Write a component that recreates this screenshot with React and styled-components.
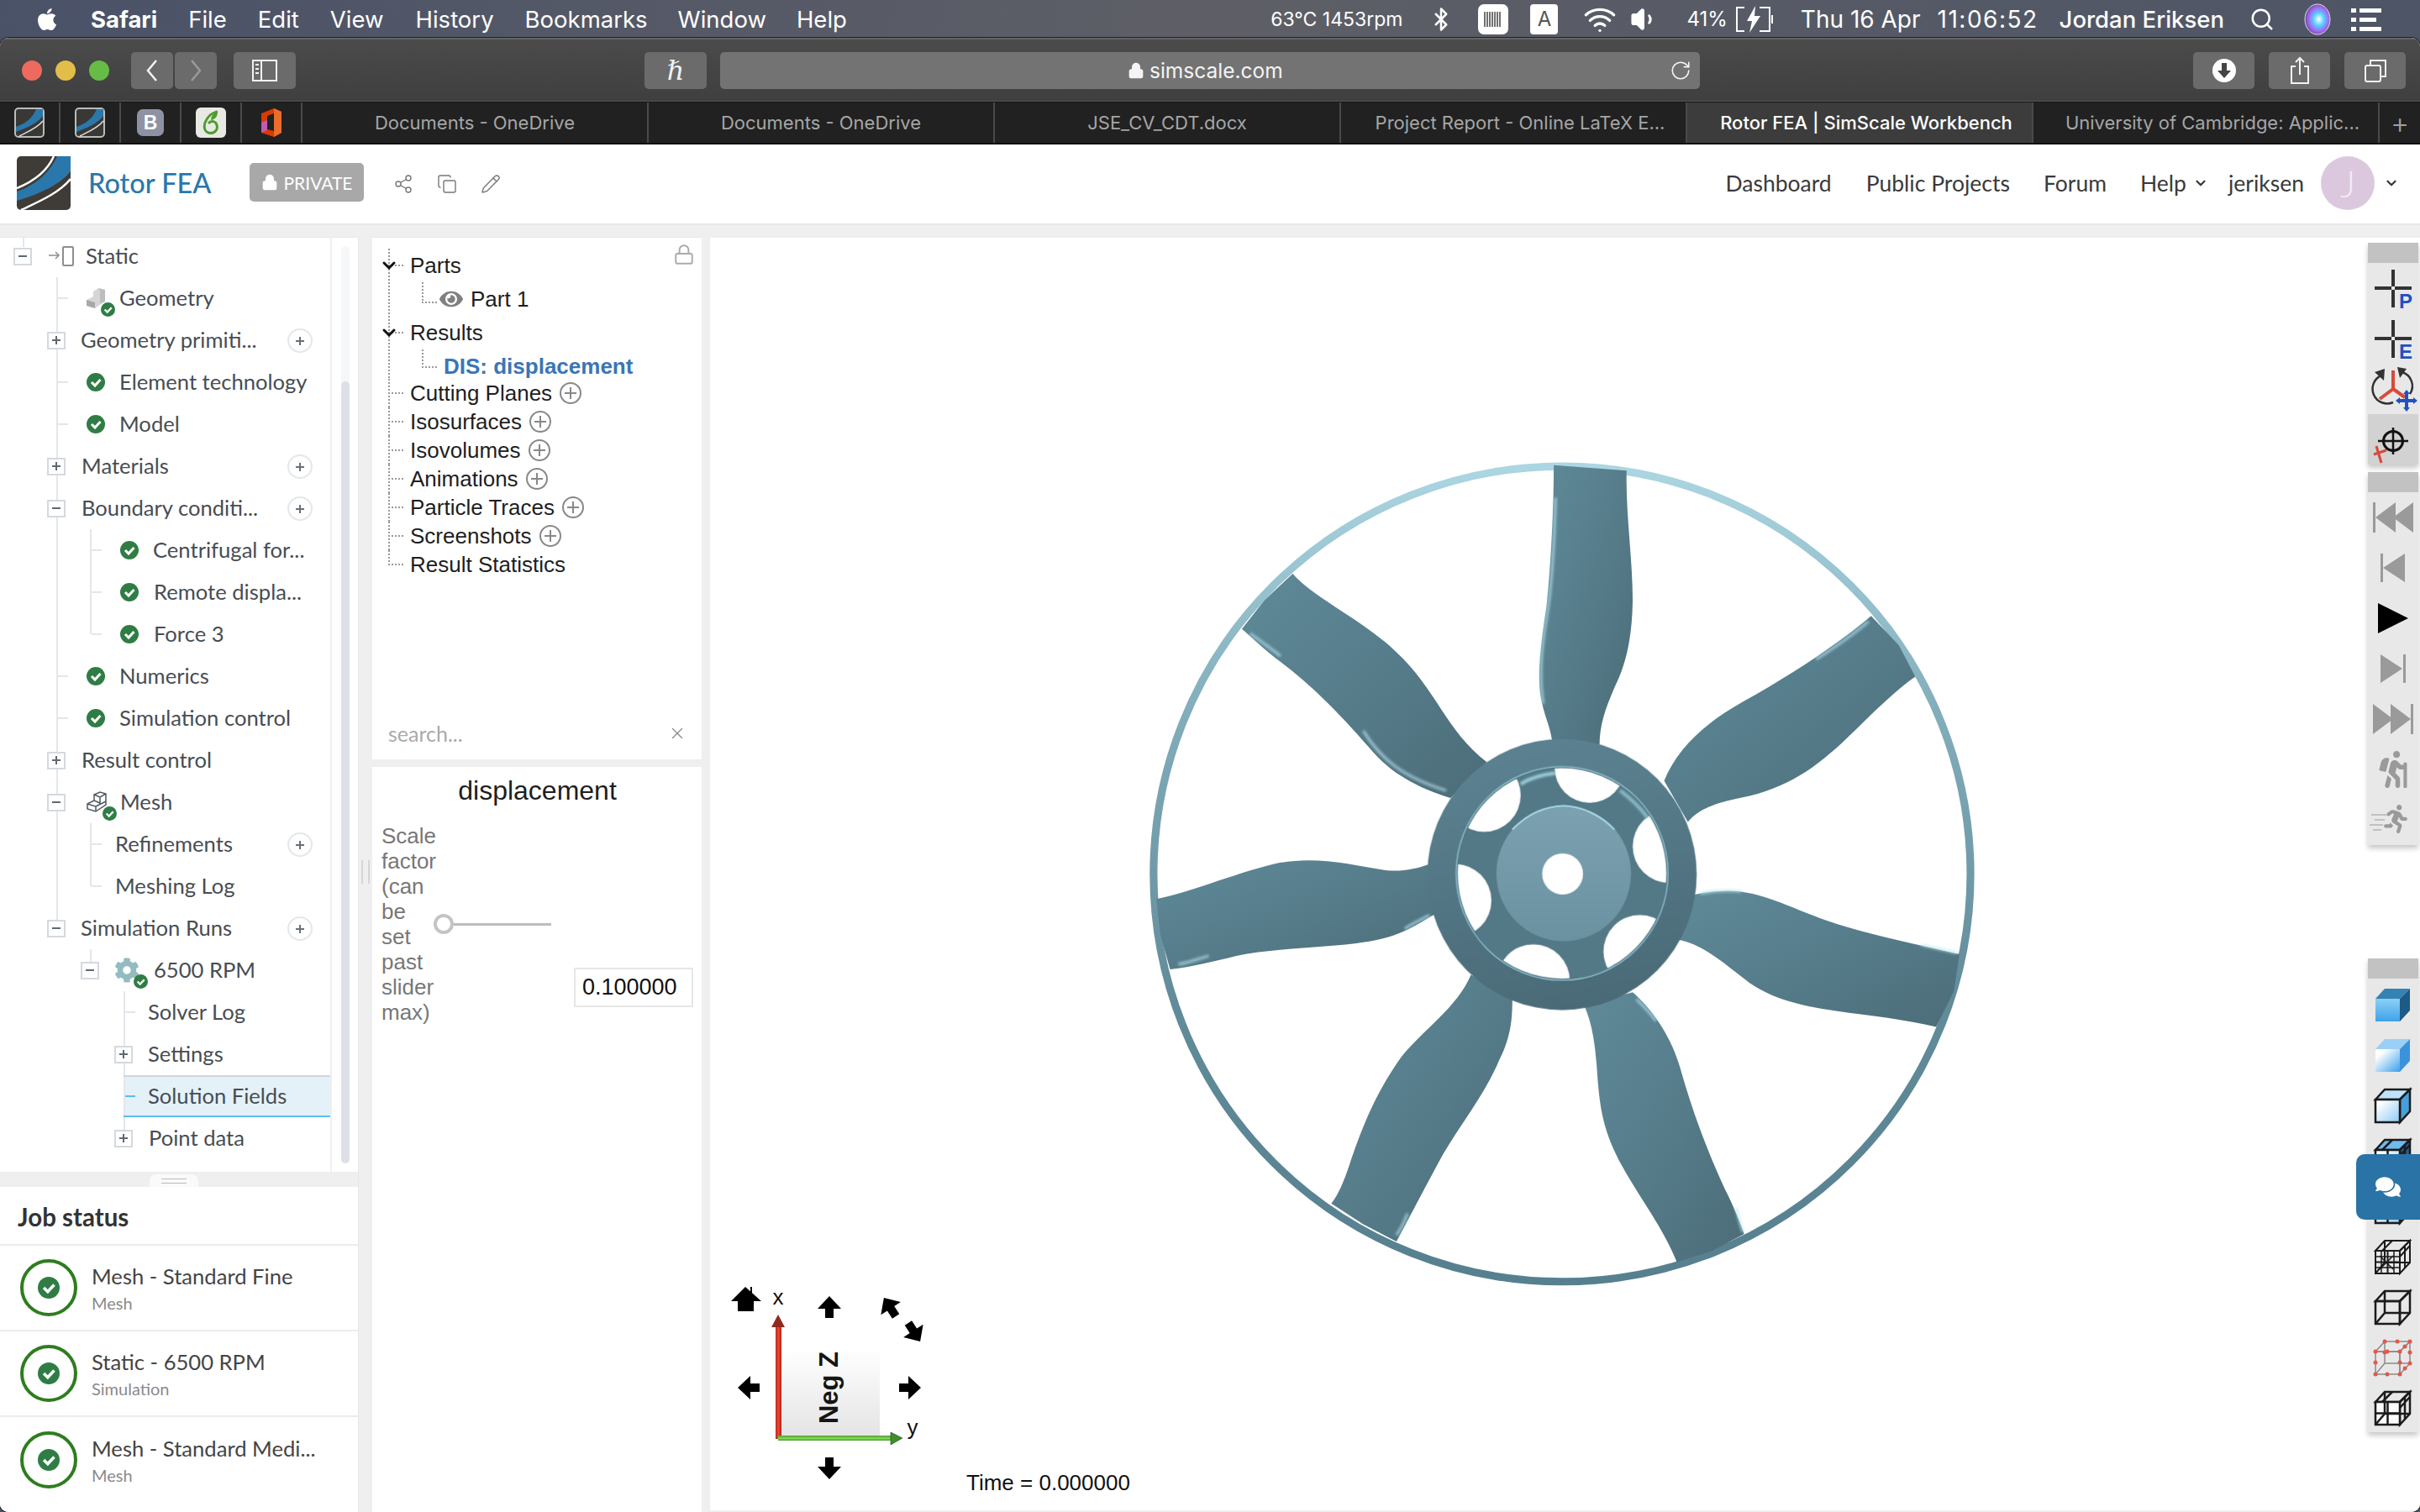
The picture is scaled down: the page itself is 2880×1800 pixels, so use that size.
import styled, { createGlobalStyle } from "styled-components";
import { Bluetooth, ChevronDown, Copy, Lock, Pencil, RotateCw, Search, Share2, Volume1, Wifi, X } from "lucide-react";
import { FaApple, FaCog, FaComments, FaHiking, FaRunning, FaEye } from "react-icons/fa";

const GlobalStyle = createGlobalStyle`
    html, body {
        margin: 0;
        width: 2880px;
        height: 1800px;
        overflow: hidden;
        background: #000;
    }
    * { box-sizing: border-box; }
`;

const Page = styled.div`
    width: 2880px;
    height: 1800px;
    display: flex;
    flex-direction: column;
    background: linear-gradient(90deg, #4a5268, #5e5f66 50%, #4e5566);
    font-family: "Lato", sans-serif;
`;

const MenuBar = styled.div`
    height: 45px;
    flex: none;
    display: flex;
    align-items: center;
    padding-left: 41px;
    color: #fff;
    font-family: "Inter", sans-serif;
    font-size: 27.5px;
`;

const MenuItem = styled.span`
    margin-left: ${props => props.$ml}px;
    font-weight: ${props => props.$bold ? 700 : 400};
    white-space: nowrap;
`;

const StatusArea = styled.div`
    margin-left: auto;
    display: flex;
    align-items: center;
    height: 100%;
`;

const StatusText = styled.span`
    margin-left: ${props => props.$ml || 0}px;
    font-size: ${props => props.$size || 28}px;
    font-weight: ${props => props.$weight || 400};
    letter-spacing: ${props => props.$track || 0}px;
    white-space: nowrap;
`;

const StatusIcon = styled.span`
    margin-left: ${props => props.$ml}px;
    display: flex;
    align-items: center;
`;

const InputBadge = styled.span`
    margin-left: ${props => props.$ml}px;
    width: 33px;
    height: 36px;
    background: #fff;
    border-radius: 4px;
    color: #555;
    font-size: 24px;
    display: flex;
    align-items: center;
    justify-content: center;
`;

const Window = styled.div`
    flex: 1;
    display: flex;
    flex-direction: column;
    min-height: 0;
    border-radius: 10px;
    overflow: hidden;
    background: #fff;
    box-shadow: 0 0 0 1px #222;
`;

const Toolbar = styled.div`
    height: 76px;
    flex: none;
    display: flex;
    align-items: center;
    padding-left: 26px;
    background: linear-gradient(#4b4b4b, #3f3f3f);
    border-top: 2px solid #646464;
    border-bottom: 1px solid #555;
`;

const Light = styled.span`
    width: 24px;
    height: 24px;
    border-radius: 50%;
    margin-right: 16px;
    background: ${props => props.$color};
`;

const ToolButton = styled.button`
    width: ${props => props.$w || 50}px;
    height: 44px;
    margin-left: ${props => props.$ml || 0}px;
    border: none;
    border-radius: 5px;
    background: #6b6b6b;
    color: ${props => props.$dim ? "#9a9a9a" : "#f2f2f2"};
    padding: 0;
    display: flex;
    align-items: center;
    justify-content: center;
    flex: none;
`;

const HistoryGlyph = styled.span`
    font-family: "DejaVu Serif", serif;
    font-style: italic;
    font-size: 32px;
    line-height: 1;
`;

const UrlBar = styled.div`
    width: 1166px;
    height: 44px;
    margin-left: 16px;
    padding: 0 10px 0 485px;
    border-radius: 5px;
    background: #737373;
    color: #f4f4f4;
    font-family: "Inter", sans-serif;
    font-size: 24.5px;
    display: flex;
    align-items: center;
    gap: 6px;
    flex: none;
`;

const Reload = styled.span`
    margin-left: auto;
    display: flex;
`;

const TabBar = styled.div`
    height: 51px;
    flex: none;
    display: flex;
    background: #212121;
    border-bottom: 2px solid #0e0e0e;
    border-top: 1px solid #141414;
    font-family: "Inter", sans-serif;
    font-size: 22px;
`;

const PinnedTab = styled.div`
    width: 72px;
    flex: none;
    display: flex;
    align-items: center;
    justify-content: center;
    border-right: 2px solid #4a4a4a;
`;

const Tab = styled.div`
    width: 412px;
    flex: none;
    display: flex;
    align-items: center;
    justify-content: center;
    padding-left: ${props => props.$pl}px;
    white-space: nowrap;
    border-right: 2px solid #4a4a4a;
    background: ${props => props.$active ? "#3c3c3c" : "transparent"};
    color: ${props => props.$active ? "#fff" : "#a6a6a6"};
    font-weight: ${props => props.$active ? 500 : 400};
`;

const NewTab = styled.div`
    flex: 1;
    display: flex;
    align-items: center;
    justify-content: center;
    color: #a0a0a0;
    font-size: 34px;
    font-weight: 300;
`;

const FaviconB = styled.span`
    width: 32px;
    height: 32px;
    border-radius: 7px;
    background: #8e92a4;
    color: #fff;
    font-family: "Liberation Sans", sans-serif;
    font-weight: 700;
    font-size: 23px;
    display: flex;
    align-items: center;
    justify-content: center;
`;

const AppHeader = styled.header`
    height: 96px;
    flex: none;
    display: flex;
    align-items: center;
    padding: 0 25px 2px 20px;
    background: #fff;
    border-bottom: 2px solid #e8e8e8;
`;

const ProjectName = styled.span`
    margin: 0 0 2px 21px;
    color: #2a78ab;
    font-size: 32.5px;
    font-weight: 500;
`;

const PrivateBadge = styled.span`
    margin: 0 0 2px 46px;
    width: 136px;
    height: 46px;
    border-radius: 5px;
    background: #a8a8a8;
    color: #fff;
    font-size: 21px;
    display: flex;
    align-items: center;
    justify-content: center;
    gap: 6px;
`;

const HeaderActions = styled.div`
    margin: 2px 0 0 35px;
    display: flex;
    gap: 28px;
    color: #777;
`;

const Nav = styled.nav`
    margin-left: auto;
    display: flex;
    align-items: center;
    color: #3a3a3a;
    font-size: 26.5px;
`;

const NavLink = styled.span`
    margin-left: ${props => props.$ml || 0}px;
    white-space: nowrap;
    display: flex;
    align-items: center;
    gap: 8px;
`;

const Avatar = styled.span`
    width: 64px;
    height: 64px;
    margin: 0 11px 0 20px;
    border-radius: 50%;
    background: #dcc8de;
    color: #f3ecf4;
    font-size: 44px;
    font-weight: 300;
    display: flex;
    align-items: center;
    justify-content: center;
`;

const Workspace = styled.main`
    flex: 1;
    min-height: 0;
    display: flex;
    padding-top: 14px;
    background: #efefef;
`;

const LeftColumn = styled.div`
    width: 427px;
    flex: none;
    display: flex;
    flex-direction: column;
    border-right: 1px solid #e8e8e8;
`;

const TreePanel = styled.section`
    height: 1113px;
    flex: none;
    display: flex;
    overflow: hidden;
    background: #fff;
    border-top: 1px solid #e8e8e8;
`;

const TreeList = styled.div`
    width: 395px;
    flex: none;
    margin-top: -3px;
    border-right: 2px solid #edf0f2;
    color: #474d53;
    font-size: 25.6px;
`;

const ScrollTrack = styled.div`
    width: 10px;
    margin: 10px 0 10px 11px;
    padding-top: 161px;
    border-radius: 5px;
    background: #f5f7f9;
`;

const ScrollThumb = styled.div`
    height: 100%;
    border-radius: 5px;
    background: #dde1e6;
`;

const treeBackground = ({ $lines = [], $stub, $selected }) => {
    const layers = [];
    $lines.forEach(([x, h]) => {
        layers.push(`linear-gradient(#e3e6ea, #e3e6ea) ${x}px 0 / 2px ${h} no-repeat`);
    });
    if ($stub) {
        const c = $selected ? "#5bbcf0" : "#e3e6ea";
        layers.unshift(`linear-gradient(${c}, ${c}) ${$stub + 2}px 24px / 12px 2px no-repeat`);
    }
    if ($selected) {
        layers.unshift(`linear-gradient(#5bbcf0, #5bbcf0) ${$selected}px 48px / 100% 2px no-repeat`);
        layers.unshift(`linear-gradient(#cfd6dc, #cfd6dc) ${$selected}px 0 / 100% 2px no-repeat`);
        layers.push(`linear-gradient(#e5f1f8, #e5f1f8) ${$selected}px 0 / 100% 100% no-repeat`);
    }
    return layers.length ? layers.join(", ") : "none";
};

const TreeRow = styled.div`
    height: 50px;
    display: flex;
    align-items: center;
    white-space: nowrap;
    background: ${treeBackground};
`;

const Toggle = styled.span`
    position: relative;
    width: 22px;
    height: 21px;
    flex: none;
    margin-left: ${props => props.$ml}px;
    border: 2px solid #d4d9de;
    background: #fff;
    &::before {
        content: "";
        position: absolute;
        left: 4px;
        top: 7px;
        width: 10px;
        height: 2px;
        background: #5d6872;
    }
    &::after {
        content: "";
        position: absolute;
        left: 8px;
        top: 3px;
        width: 2px;
        height: 10px;
        background: #5d6872;
        display: ${props => props.$open ? "none" : "block"};
    }
`;

const IconSlot = styled.span`
    position: relative;
    width: ${props => props.$w}px;
    height: 30px;
    flex: none;
    margin-left: ${props => props.$ml}px;
    display: flex;
    align-items: center;
`;

const BadgeSlot = styled.span`
    position: absolute;
    right: -10px;
    bottom: -7px;
    display: flex;
`;

const TreeLabel = styled.span`
    margin-left: ${props => props.$ml}px;
    margin-bottom: 3px;
`;

const AddButton = styled.span`
    position: relative;
    width: 30px;
    height: 29px;
    flex: none;
    margin: 0 21px 0 auto;
    border: 2px solid #e4e7eb;
    border-radius: 50%;
    &::before {
        content: "";
        position: absolute;
        left: 8px;
        top: 12px;
        width: 10px;
        height: 2px;
        background: #66717b;
    }
    &::after {
        content: "";
        position: absolute;
        left: 12px;
        top: 8px;
        width: 2px;
        height: 10px;
        background: #66717b;
    }
`;

const SplitH = styled.div`
    height: 18px;
    flex: none;
    display: flex;
    justify-content: center;
    background: #efefef;
    padding-right: 12px;
`;

const SplitHandle = styled.div`
    width: 58px;
    height: 15px;
    margin-top: 3px;
    border-radius: 8px 8px 0 0;
    background: #fafafa;
    display: flex;
    align-items: center;
    justify-content: center;
    &::before {
        content: "";
        width: 30px;
        height: 4px;
        border-top: 1px solid #bbb;
        border-bottom: 1px solid #bbb;
    }
`;

const JobPanel = styled.section`
    flex: 1;
    background: #fff;
    display: flex;
    flex-direction: column;
`;

const JobTitle = styled.h3`
    margin: 0;
    height: 70px;
    flex: none;
    padding: 2px 0 0 21px;
    display: flex;
    align-items: center;
    color: #333;
    font-size: 29.5px;
    font-weight: 700;
    border-bottom: 2px solid #ececec;
`;

const JobRow = styled.div`
    height: 102px;
    flex: none;
    display: flex;
    align-items: center;
    border-bottom: ${props => props.$last ? "none" : "2px solid #ececec"};
    padding-left: 24px;
    gap: 17px;
`;

const JobRing = styled.span`
    width: 68px;
    height: 68px;
    flex: none;
    border: 4px solid #2e7d1e;
    border-radius: 50%;
    display: flex;
    align-items: center;
    justify-content: center;
`;

const JobText = styled.div`
    padding-top: 2px;
`;

const JobName = styled.div`
    color: #444;
    font-size: 25.6px;
    line-height: 34px;
    white-space: nowrap;
`;

const JobKind = styled.div`
    color: #8a8a8a;
    font-size: 20px;
    line-height: 30px;
`;

const GutterV = styled.div`
    width: ${props => props.$w}px;
    flex: none;
    display: flex;
    justify-content: center;
    padding-top: ${props => props.$top || 0}px;
    &::before {
        content: "";
        display: ${props => props.$top ? "block" : "none"};
        width: 6px;
        height: 28px;
        border-left: 2px solid #d5d5d5;
        border-right: 2px solid #d5d5d5;
    }
`;

const MiddleColumn = styled.div`
    width: 392px;
    flex: none;
    display: flex;
    flex-direction: column;
    gap: 9px;
`;

const PartsPanel = styled.section`
    position: relative;
    height: 622px;
    flex: none;
    padding-top: 13px;
    display: flex;
    flex-direction: column;
    background: #fff;
    border-top: 1px solid #e8e8e8;
    font-family: "Liberation Sans", sans-serif;
    font-size: 26px;
    color: #1e1e1e;
`;

const LockMark = styled.span`
    position: absolute;
    top: 7px;
    right: 8px;
    color: #aaa;
    display: flex;
`;

const dots = "repeating-linear-gradient";

const PartsRow = styled.div`
    height: ${props => props.$h || 34}px;
    padding-top: ${props => props.$pt || 0}px;
    padding-left: ${props => props.$pl || 45}px;
    display: flex;
    align-items: center;
    gap: 9px;
    white-space: nowrap;
    background:
        ${props => props.$child
            ? `${dots}(to right, #999 0 2px, transparent 2px 4px) 59px 60% / 20px 2px no-repeat,
               ${dots}(to bottom, #999 0 2px, transparent 2px 4px) 59px 0 / 2px 60% no-repeat,`
            : `${dots}(to right, #999 0 2px, transparent 2px 4px) 19px 50% / 20px 2px no-repeat,`}
        ${dots}(to bottom, #999 0 2px, transparent 2px 4px) 19px 0 / 2px ${props => props.$end ? "50%" : "100%"} no-repeat;
`;

const FoldMark = styled.span`
    width: 24px;
    margin-left: -37px;
    margin-right: 4px;
    display: flex;
`;

const ResultLink = styled.span`
    color: #3a76b5;
    font-weight: 700;
`;

const SearchRow = styled.div`
    margin-top: auto;
    height: 62px;
    padding: 0 18px 0 19px;
    display: flex;
    align-items: center;
    justify-content: space-between;
    color: #aaa;
    font-family: "Lato", sans-serif;
    font-size: 25px;
`;

const PropsPanel = styled.section`
    flex: 1;
    padding: 9px 10px 0 11px;
    background: #fff;
    font-family: "Liberation Sans", sans-serif;
`;

const PropsTitle = styled.h4`
    margin: 0 0 20px;
    height: 38px;
    line-height: 38px;
    text-align: center;
    font-size: 32px;
    font-weight: 400;
    color: #1e1e1e;
`;

const FieldRow = styled.div`
    display: grid;
    grid-template-columns: 62px 140px 1fr;
`;

const FieldLabel = styled.div`
    color: #777;
    font-size: 26px;
    line-height: 30px;
`;

const SliderWrap = styled.div`
    display: flex;
    align-items: center;
`;

const SliderThumb = styled.span`
    width: 24px;
    height: 24px;
    flex: none;
    border: 4px solid #c4c4c4;
    border-radius: 50%;
    background: #fff;
`;

const SliderTrack = styled.span`
    width: 116px;
    height: 3px;
    background: #bdbdbd;
`;

const ValueBox = styled.div`
    align-self: end;
    justify-self: end;
    width: 142px;
    height: 47px;
    margin-bottom: 21px;
    padding-left: 8px;
    display: flex;
    align-items: center;
    border: 2px solid #e6e6e6;
    font-size: 27px;
    color: #111;
`;

const Viewer = styled.section`
    position: relative;
    flex: 1;
    margin: 1px 0 2px 0;
    background: #fff;
    overflow: hidden;
`;

const RotorFrame = styled.svg`
    position: absolute;
    left: 495px;
    top: 245px;
`;

const TriadFrame = styled.div`
    position: absolute;
    left: 16px;
    top: 1242px;
`;

const TimeLabel = styled.span`
    position: absolute;
    left: 305px;
    top: 1467px;
    font-family: "Liberation Sans", sans-serif;
    font-size: 26px;
    color: #111;
`;

const ToolColumn = styled.div`
    position: absolute;
    top: 6px;
    right: 2px;
    width: 60px;
    display: flex;
    flex-direction: column;
`;

const ToolGroup = styled.div`
    margin-top: ${props => props.$mt || 0}px;
    background: #e8e8e8;
    box-shadow: 0 4px 6px rgba(0, 0, 0, 0.22);
    &::before {
        content: "";
        display: block;
        height: 24px;
        background: #c2c2c2;
    }
`;

const ToolCell = styled.div`
    height: 60px;
    display: flex;
    align-items: center;
    justify-content: center;
    color: #9a9a9a;
    background: ${props => props.$active ? "#d2d2d2" : "transparent"};
`;

const ChatTab = styled.div`
    position: absolute;
    top: 1091px;
    right: 0;
    width: 76px;
    height: 78px;
    border-radius: 10px 0 0 10px;
    background: #2a73a6;
    color: #fff;
    display: flex;
    align-items: center;
    justify-content: center;
`;

const BlueLetter = styled.text`
    font-family: "Liberation Sans", sans-serif;
    font-weight: 700;
    font-size: 24px;
    fill: #2150c0;
`;

const LogoMark = ({ size = 64 }) => (
    <svg width={size} height={size} viewBox="0 0 64 64">
        <rect width="64" height="64" rx="5" fill="#3f3b36" />
        <path d="M48 0H64V18C52 33 28 45 0 53V42C24 34 40 18 48 0Z" fill="#2a78ab" />
        <path d="M44 0C36 18 20 30 0 38" stroke="#fff" strokeWidth="2.5" fill="none" />
        <path d="M64 27C50 44 26 54 5 64" stroke="#fff" strokeWidth="2.5" fill="none" />
    </svg>
);

const PinnedLogo = () => (
    <svg width="36" height="36" viewBox="0 0 36 36">
        <rect x="1" y="1" width="34" height="34" rx="4" fill="#3a3835" stroke="#bbb" strokeWidth="2" />
        <path d="M26 2H34V10C28 18 16 24 2 29V23C14 19 22 12 26 2Z" fill="#2a78ab" />
        <path d="M34 16C28 24 16 29 6 34" stroke="#ddd" strokeWidth="1.5" fill="none" />
    </svg>
);

const OverleafMark = () => (
    <svg width="36" height="36" viewBox="0 0 36 36">
        <rect width="36" height="36" rx="6" fill="#e9e9e4" />
        <path d="M26 5C20 6 16 9 13 14C9 20 9 28 15 30C21 32 27 27 25 21C24 16 18 15 15 19" stroke="#4f9c30" strokeWidth="3" fill="none" />
        <path d="M26 5C26 11 23 14 18 15C18 10 21 7 26 5Z" fill="#4f9c30" />
    </svg>
);

const OfficeMark = () => (
    <svg width="26" height="36" viewBox="0 0 26 36">
        <path d="M16 1L25 5V30L16 35L1 30V7Z" fill="#d83b01" />
        <path d="M16 1L25 5V30L16 35Z" fill="#eb6c2b" />
        <path d="M8 10L16 7V28L8 26Z" fill="#212121" />
        <path d="M1 18V30L8 27V15Z" fill="#c35ab5" />
    </svg>
);

const BatteryBar = () => (
    <svg width="36" height="36" viewBox="0 0 36 36">
        <rect width="36" height="36" rx="7" fill="#fff" />
        <path d="M8 9V27M11 9V27M14 9V27M17 9V27M20 9V27M23 9V27M26 9V27" stroke="#444" strokeWidth="1.5" />
    </svg>
);

const BatteryCharge = () => (
    <svg width="48" height="34" viewBox="0 0 48 34" fill="none">
        <path d="M12 3H3V31H12M30 3H42V31H30" stroke="#fff" strokeWidth="2" />
        <path d="M25 1L15 19H21L18 33L31 13H24Z" fill="#fff" />
        <path d="M45 12V22" stroke="#fff" strokeWidth="2" />
    </svg>
);

const SiriMark = () => (
    <svg width="32" height="38" viewBox="0 0 32 38">
        <defs>
            <radialGradient id="siri" cx="55%" cy="50%" r="60%">
                <stop offset="0" stopColor="#fff" />
                <stop offset="0.35" stopColor="#58d0ff" />
                <stop offset="0.7" stopColor="#a85cf0" />
                <stop offset="1" stopColor="#3a4a70" />
            </radialGradient>
        </defs>
        <ellipse cx="16" cy="19" rx="15" ry="18" fill="url(#siri)" stroke="#ddd" />
    </svg>
);

const MenuExtras = () => (
    <svg width="36" height="30" viewBox="0 0 36 30" fill="#fff">
        <rect x="0" y="2" width="6" height="5" />
        <rect x="10" y="2" width="26" height="5" />
        <rect x="0" y="13" width="6" height="5" />
        <rect x="10" y="13" width="20" height="5" />
        <rect x="0" y="24" width="6" height="5" />
        <rect x="10" y="24" width="26" height="5" />
    </svg>
);

const SidebarGlyph = () => (
    <svg width="30" height="26" viewBox="0 0 30 26" fill="none" stroke="#f2f2f2" strokeWidth="2">
        <rect x="1" y="1" width="28" height="24" />
        <path d="M11 1V25" />
        <path d="M4 6H8M4 11H8M4 16H8" />
    </svg>
);

const NavChevron = ({ back, dim }) => (
    <svg width="16" height="26" viewBox="0 0 16 26" fill="none" stroke={dim ? "#9a9a9a" : "#f2f2f2"} strokeWidth="2.5">
        <path d={back ? "M13 1L3 13L13 25" : "M3 1L13 13L3 25"} />
    </svg>
);

const DownloadGlyph = () => (
    <svg width="28" height="28" viewBox="0 0 28 28">
        <circle cx="14" cy="14" r="14" fill="#fff" />
        <path d="M11 5H17V14H22L14 23L6 14H11Z" fill="#444" />
    </svg>
);

const ShareGlyph = () => (
    <svg width="24" height="34" viewBox="0 0 24 34" fill="none" stroke="#f2f2f2" strokeWidth="2">
        <path d="M7 12H2V32H22V12H17" />
        <path d="M12 22V2M7 7L12 2L17 7" />
    </svg>
);

const TabsGlyph = () => (
    <svg width="28" height="28" viewBox="0 0 28 28" fill="none" stroke="#f2f2f2" strokeWidth="2">
        <rect x="2" y="8" width="18" height="19" rx="2" />
        <path d="M8 8V2H26V21H20" />
    </svg>
);

const CheckBadge = ({ size = 22 }) => (
    <svg width={size} height={size} viewBox="0 0 22 22">
        <circle cx="11" cy="11" r="11" fill="#2f7d45" />
        <path d="M6 11L10 15L16.5 8" stroke="#fff" strokeWidth="3" fill="none" />
    </svg>
);

const StaticIcon = () => (
    <svg width="30" height="26" viewBox="0 0 30 26" fill="none" stroke="#8a8f94">
        <path d="M0 12H11M8 8L12 12L8 16" strokeWidth="1.5" />
        <rect x="17" y="2" width="12" height="22" rx="1" strokeWidth="2" />
    </svg>
);

const GeometryIcon = () => (
    <svg width="24" height="28" viewBox="0 0 24 28">
        <path d="M0 16L8 12L8 6L14 2L22 4V18L10 26L0 23Z" fill="#d6d6d6" />
        <path d="M0 16L10 19V26L0 23Z" fill="#a9a9a9" />
        <path d="M14 2L22 4V18L16 20V5Z" fill="#bdbdbd" />
    </svg>
);

const MeshIcon = () => (
    <svg width="26" height="28" viewBox="0 0 26 28" fill="none" stroke="#4f5a5f" strokeWidth="1.5">
        <path d="M1 16L9 12V5L16 2L23 4V17L11 25L1 22Z" />
        <path d="M1 16L11 19V25M11 19L23 13M9 5L16 8L23 4M16 8V16M9 12L16 15" />
    </svg>
);

const leafBadge = <BadgeSlot><CheckBadge size={17} /></BadgeSlot>;

const tree = [
    { label: "Static", boxAt: 16, open: true, icon: "static", iconAt: 58, textAt: 102, lines: [[27, "14px"]] },
    { label: "Geometry", icon: "geometry", iconAt: 103, textAt: 142, lines: [[67, "100%"]], stub: 67 },
    { label: "Geometry primiti...", boxAt: 56, textAt: 96, add: true, lines: [[67, "100%"]] },
    { label: "Element technology", icon: "check", iconAt: 103, textAt: 142, lines: [[67, "100%"]], stub: 67 },
    { label: "Model", icon: "check", iconAt: 103, textAt: 142, lines: [[67, "100%"]], stub: 67 },
    { label: "Materials", boxAt: 56, textAt: 97, add: true, lines: [[67, "100%"]] },
    { label: "Boundary conditi...", boxAt: 56, open: true, textAt: 97, add: true, lines: [[67, "100%"]] },
    { label: "Centrifugal for...", icon: "check", iconAt: 143, textAt: 182, lines: [[67, "100%"], [107, "100%"]], stub: 107 },
    { label: "Remote displa...", icon: "check", iconAt: 143, textAt: 183, lines: [[67, "100%"], [107, "100%"]], stub: 107 },
    { label: "Force 3", icon: "check", iconAt: 143, textAt: 183, lines: [[67, "100%"], [107, "50%"]], stub: 107 },
    { label: "Numerics", icon: "check", iconAt: 103, textAt: 142, lines: [[67, "100%"]], stub: 67 },
    { label: "Simulation control", icon: "check", iconAt: 103, textAt: 142, lines: [[67, "100%"]], stub: 67 },
    { label: "Result control", boxAt: 56, textAt: 97, lines: [[67, "100%"]] },
    { label: "Mesh", boxAt: 56, open: true, icon: "mesh", iconAt: 103, textAt: 143, lines: [[67, "100%"]] },
    { label: "Refinements", textAt: 137, add: true, lines: [[67, "100%"], [107, "100%"]], stub: 107 },
    { label: "Meshing Log", textAt: 137, lines: [[67, "100%"], [107, "50%"]], stub: 107 },
    { label: "Simulation Runs", boxAt: 56, open: true, textAt: 96, add: true, lines: [[67, "50%"]] },
    { label: "6500 RPM", boxAt: 96, open: true, icon: "gear", iconAt: 136, textAt: 183, lines: [[107, "50%"]] },
    { label: "Solver Log", textAt: 176, lines: [[147, "100%"]], stub: 147 },
    { label: "Settings", boxAt: 136, textAt: 176, lines: [[147, "100%"]] },
    { label: "Solution Fields", textAt: 176, lines: [[147, "100%"]], stub: 147, selected: 147 },
    { label: "Point data", boxAt: 136, textAt: 177, lines: [[147, "50%"]] },
];

const iconWidths = { static: 30, geometry: 24, mesh: 26, gear: 30, check: 22 };

function NodeIcon({ kind, ml }) {
    return (
        <IconSlot $w={iconWidths[kind]} $ml={ml}>
            {kind === "static" && <StaticIcon />}
            {kind === "geometry" && <GeometryIcon />}
            {kind === "mesh" && <MeshIcon />}
            {kind === "gear" && <FaCog size={30} color="#93bcc0" />}
            {kind === "check" && <CheckBadge />}
            {kind !== "static" && kind !== "check" && leafBadge}
        </IconSlot>
    );
}

function TreeNode({ item }) {
    let cursor = 0;
    let boxMargin = 0;
    let iconMargin = 0;
    if (item.boxAt !== undefined) {
        boxMargin = item.boxAt;
        cursor = item.boxAt + 22;
    }
    if (item.icon) {
        iconMargin = item.iconAt - cursor;
        cursor = item.iconAt + iconWidths[item.icon];
    }
    return (
        <TreeRow $lines={item.lines} $stub={item.stub} $selected={item.selected}>
            {item.boxAt !== undefined && <Toggle $ml={boxMargin} $open={item.open} />}
            {item.icon && <NodeIcon kind={item.icon} ml={iconMargin} />}
            <TreeLabel $ml={item.textAt - cursor}>{item.label}</TreeLabel>
            {item.add && <AddButton />}
        </TreeRow>
    );
}

const jobs = [
    { name: "Mesh - Standard Fine", kind: "Mesh" },
    { name: "Static - 6500 RPM", kind: "Simulation" },
    { name: "Mesh - Standard Medi...", kind: "Mesh" },
];

const CirclePlus = () => (
    <svg width="26" height="26" viewBox="0 0 26 26" fill="none" stroke="#888" strokeWidth="2">
        <circle cx="13" cy="13" r="12" />
        <path d="M13 6V20M6 13H20" />
    </svg>
);

const Crosshair = ({ letter }) => (
    <svg width="60" height="60" viewBox="0 0 60 60">
        <path d="M8 30H28M32 30H52" stroke="#333" strokeWidth="4" />
        <path d="M30 8V28M30 32V53" stroke="#333" strokeWidth="4" />
        <BlueLetter x="37" y="54">{letter}</BlueLetter>
    </svg>
);

const RotateAxes = () => (
    <svg width="60" height="60" viewBox="0 0 60 60" fill="none">
        <path d="M16 14A17 17 0 1 0 30 46" stroke="#333" strokeWidth="2.5" />
        <path d="M40 10A17 17 0 0 1 50 36" stroke="#333" strokeWidth="2.5" />
        <path d="M8 10L20 6L19 20ZM35 4L46 6L38 17Z" fill="#333" />
        <path d="M30 8V30L14 42M30 30L44 40" stroke="#d84a3a" strokeWidth="4" />
        <path d="M36 44H56M46 34V54" stroke="#2150c0" strokeWidth="4" />
        <path d="M46 31L42 36H50ZM46 57L42 52H50ZM33 44L38 40V48ZM59 44L54 40V48Z" fill="#2150c0" />
    </svg>
);

const TargetPick = () => (
    <svg width="60" height="60" viewBox="0 0 60 60" fill="none">
        <circle cx="30" cy="32" r="11.5" stroke="#111" strokeWidth="3" />
        <path d="M12 32H48M30 16V48" stroke="#111" strokeWidth="2.5" />
        <path d="M7 48L22 43M10 38L16 58" stroke="#d8483a" strokeWidth="3" />
    </svg>
);

const PlayShape = ({ d, fill = "#9a9a9a" }) => (
    <svg width="60" height="60" viewBox="0 0 60 60" fill={fill}><path d={d} /></svg>
);

const RunnerIcon = () => (
    <svg width="60" height="60" viewBox="0 0 60 60" fill="#9a9a9a">
        <path d="M4 24H22M8 30H20M2 36H18M6 42H16" stroke="#9a9a9a" strokeWidth="1.2" />
        <FaRunning x="16" y="12" size={34} />
    </svg>
);

const playback = [
    "M6 12H9V48H6ZM9 30L33 12V48ZM30 30L54 12V48Z",
    "M15 13H18V47H15ZM18 30L44 13V47Z",
    "M12 12L48 30L12 48Z",
    "M15 13L41 30L15 47ZM42 13H45V47H42Z",
    "M6 12L30 30L6 48ZM27 12L51 30L27 48ZM51 12H54V48H51Z",
];

const Cube = ({ variant }) => {
    const solid = variant === "shaded" || variant === "light" || variant === "edges";
    const stroke = variant === "shaded" || variant === "light" ? "none" : "#1b1b1b";
    const wire = variant === "wire" || variant === "dense" || variant === "nodes" || variant === "white";
    const faceFill = { shaded: "url(#cubeA)", light: "url(#cubeB)", edges: "url(#cubeC)", mesh: "url(#cubeC)", white: "#fbfbfb" }[variant] || "none";
    const topFill = { shaded: "#3582b4", light: "#9ccff5", edges: "#bde2fa", mesh: "#6ebbee" }[variant] || "none";
    const sideFill = { shaded: "#1d5a86", light: "#3b92dc", edges: "#47a0de", mesh: "#245f8e" }[variant] || "none";
    const lineColor = variant === "nodes" ? "#8a8a8a" : stroke;
    const strokeWidth = variant === "nodes" ? 1.5 : variant === "dense" ? 2 : 2.5;
    return (
        <svg width="60" height="60" viewBox="0 0 60 60" fill="none">
            <path d="M9 24L20 12H50L38 24Z" fill={topFill} stroke={lineColor} strokeWidth={strokeWidth} />
            <path d="M38 24L50 12V38L38 51Z" fill={sideFill} stroke={lineColor} strokeWidth={strokeWidth} />
            <rect x="9" y="24" width="29" height="27" fill={faceFill} stroke={lineColor} strokeWidth={strokeWidth} />
            {!solid && wire && (
                <path d="M20 12V38L9 51M20 38H50" stroke={lineColor} strokeWidth={strokeWidth} />
            )}
            {(variant === "mesh" || variant === "dense" || variant === "white") && (
                <path d="M23.5 24V51M9 37.5H38M29 12L17 24M44 18V44M38 31L50 18" stroke={lineColor} strokeWidth={strokeWidth} />
            )}
            {variant === "dense" && (
                <path d="M16 24V51M31 24V51M9 31H38M9 44H38M14 30L30 46M30 30L14 46" stroke={lineColor} strokeWidth="1.5" />
            )}
            {variant === "nodes" && (
                <g fill="#e2584a">
                    {[[9, 24], [23, 24], [38, 24], [9, 37], [38, 37], [9, 51], [23, 51], [38, 51], [20, 12], [35, 12], [50, 12], [50, 25], [50, 38], [44, 18], [44, 44], [20, 25]].map(([x, y]) => (
                        <circle key={`${x}-${y}`} cx={x} cy={y} r="2.5" />
                    ))}
                </g>
            )}
        </svg>
    );
};

const cubeVariants = ["shaded", "light", "edges", "mesh", "mesh", "dense", "wire", "nodes", "white"];

const CubeGradients = () => (
    <svg width="0" height="0" style={{ position: "absolute" }}>
        <defs>
            <linearGradient id="cubeA" x1="0" y1="0" x2="0" y2="1">
                <stop offset="0" stopColor="#8cd0f6" />
                <stop offset="1" stopColor="#3fa2ea" />
            </linearGradient>
            <linearGradient id="cubeB" x1="0" y1="0" x2="1" y2="1">
                <stop offset="0.2" stopColor="#fff" />
                <stop offset="1" stopColor="#3aa0ee" />
            </linearGradient>
            <linearGradient id="cubeC" x1="0" y1="0" x2="1" y2="1">
                <stop offset="0.15" stopColor="#fff" />
                <stop offset="1" stopColor="#8ccbf4" />
            </linearGradient>
        </defs>
    </svg>
);

const Arrow = ({ x, y, angle, scale = 1 }) => (
    <polygon
        points="0,-13 -14,2 -5,2 -5,13 5,13 5,2 14,2"
        fill="#000"
        transform={`translate(${x} ${y}) rotate(${angle}) scale(${scale})`}
    />
);

const AxisTriad = () => (
    <svg viewBox="860 1525 250 260" width="250" height="260">
        <defs>
            <linearGradient id="backdrop" x1="0" y1="0" x2="0" y2="1">
                <stop offset="0" stopColor="#fff" />
                <stop offset="1" stopColor="#e4e4e4" />
            </linearGradient>
            <linearGradient id="redAxis" x1="0" y1="0" x2="1" y2="0">
                <stop offset="0" stopColor="#b82a1c" />
                <stop offset="0.5" stopColor="#ee4433" />
                <stop offset="1" stopColor="#a82418" />
            </linearGradient>
            <linearGradient id="greenAxis" x1="0" y1="0" x2="0" y2="1">
                <stop offset="0" stopColor="#5a9a3a" />
                <stop offset="0.6" stopColor="#7be04f" />
                <stop offset="1" stopColor="#4c8c30" />
            </linearGradient>
        </defs>
        <rect x="928" y="1605" width="118" height="105" fill="url(#backdrop)" />
        <path d="M886 1532L905 1549H896V1561H877V1549H869Z" fill="#000" />
        <rect x="892" y="1532" width="2" height="8" fill="#000" />
        <Arrow x={986} y={1556} angle={0} />
        <Arrow x={890} y={1652} angle={-90} />
        <Arrow x={1082} y={1652} angle={90} />
        <Arrow x={986} y={1748} angle={180} />
        <Arrow x={1058} y={1556} angle={-33} />
        <Arrow x={1087} y={1586} angle={147} />
        <rect x="922" y="1578" width="7" height="135" fill="url(#redAxis)" />
        <polygon points="925,1565 917,1580 933,1580" fill="#8f2a1f" />
        <rect x="925" y="1709" width="134" height="6" fill="url(#greenAxis)" />
        <polygon points="1073,1712 1059,1705 1059,1720" fill="#3f8f28" stroke="#123" strokeWidth="0.5" />
        <text x="925" y="1553" textAnchor="middle" fontFamily="Liberation Sans" fontSize="26" fill="#111">x</text>
        <text x="1085" y="1708" textAnchor="middle" fontFamily="Liberation Sans" fontSize="26" fill="#111">y</text>
        <text
            x="986"
            y="1662"
            textAnchor="middle"
            transform="rotate(-90 986 1652)"
            fontFamily="Liberation Sans"
            fontWeight="700"
            fontSize="31"
            fill="#151515"
        >
            Neg Z
        </text>
    </svg>
);

const blades = [
    "M775 40C775 120 770 220 762 300C750 380 745 430 752 470C757 500 768 520 772 548L858 556C858 520 868 490 885 450C905 410 917 360 918 290C918 210 905 130 907 50Z",
    "M1350 318C1290 370 1200 430 1120 475C1050 515 1000 560 975 622L1018 698C1040 670 1080 660 1130 650C1210 630 1260 590 1320 530C1360 490 1395 455 1430 430L1400 372Z",
    "M1510 942C1440 925 1340 905 1270 880C1200 855 1150 825 1090 825C1070 825 1050 828 1030 832L1000 915C1050 925 1090 965 1130 995C1180 1030 1240 1040 1310 1050C1370 1057 1420 1065 1468 1076L1500 1010Z",
    "M918 1012C960 1050 990 1100 1005 1155C1030 1245 1060 1320 1085 1375C1100 1405 1110 1430 1120 1458L1060 1490L998 1510C975 1450 930 1390 900 1335C865 1270 858 1230 853 1150C850 1110 845 1070 830 1036Z",
    "M625 980C600 1040 540 1080 500 1130C450 1200 425 1270 405 1330C395 1360 385 1385 372 1402L430 1440L490 1472C510 1435 540 1375 575 1310C610 1250 650 1200 675 1140C695 1100 700 1070 700 1026Z",
    "M55 840C110 830 190 795 270 775C340 760 400 775 470 787C500 790 525 785 552 775L560 868C530 885 500 910 430 920C370 930 270 930 200 945C160 955 120 965 80 970L62 905Z",
    "M302 240C340 285 430 325 490 385C560 450 580 530 654 588L588 654C530 635 480 610 440 560C380 490 330 440 270 395C245 375 225 355 210 342L250 290Z",
];

const highlights = [
    "M778 100C776 180 772 260 762 320C752 380 748 430 756 480",
    "M225 350C240 362 255 372 280 392",
    "M430 530C460 580 500 615 580 640",
    "M95 960C115 958 130 950 150 945",
    "M1345 328C1320 350 1290 372 1250 398",
    "M1040 830C1060 826 1090 824 1115 826",
    "M1440 925C1470 932 1490 936 1505 940",
    "M490 1460C497 1450 505 1435 510 1420",
    "M1105 1410C1110 1425 1112 1440 1118 1455",
    "M925 1025C940 1040 950 1050 960 1065",
    "M505 895C520 885 535 878 550 870",
];

const holes = [
    [840, 598, 63.4, 64.7],
    [649, 649, 66, 67.3],
    [984, 743, 66, 67.3],
    [931, 937, 66, 67.3],
    [738, 991, 66, 67.3],
    [596, 843, 66, 67.3],
];

const Rotor = () => (
    <RotorFrame width="1030" height="1012" viewBox="0 0 1568 1568" preserveAspectRatio="none">
        <defs>
            <linearGradient id="ringShade" x1="0.5" y1="0" x2="0.5" y2="1">
                <stop offset="0" stopColor="#abd6e2" />
                <stop offset="0.3" stopColor="#82adba" />
                <stop offset="0.65" stopColor="#628c9a" />
                <stop offset="1" stopColor="#56808f" />
            </linearGradient>
            <linearGradient id="bladeShade" x1="0" y1="0" x2="1" y2="1">
                <stop offset="0" stopColor="#5f8a98" />
                <stop offset="0.5" stopColor="#567c8a" />
                <stop offset="1" stopColor="#4c6c78" />
            </linearGradient>
            <linearGradient id="hubShade" x1="0.4" y1="0" x2="0.6" y2="1">
                <stop offset="0" stopColor="#5c8291" />
                <stop offset="1" stopColor="#4a6a77" />
            </linearGradient>
            <linearGradient id="discShade" x1="0.5" y1="0" x2="0.5" y2="1">
                <stop offset="0" stopColor="#7ca2b1" />
                <stop offset="1" stopColor="#6b92a1" />
            </linearGradient>
            <clipPath id="hubOpening">
                <ellipse cx="790" cy="793" rx="189" ry="194" />
            </clipPath>
            <filter id="soft" x="-20%" y="-20%" width="140%" height="140%">
                <feGaussianBlur stdDeviation="2.5" />
            </filter>
        </defs>
        <ellipse cx="790" cy="794" rx="740" ry="752" fill="none" stroke="url(#ringShade)" strokeWidth="14" />
        {blades.map(d => <path key={d} d={d} fill="url(#bladeShade)" />)}
        <g filter="url(#soft)">
            {highlights.map(d => <path key={d} d={d} fill="none" stroke="#b8e6f0" strokeWidth="5" opacity="0.7" />)}
        </g>
        <ellipse cx="790" cy="795" rx="244" ry="250" fill="url(#hubShade)" />
        <ellipse cx="790" cy="793" rx="192" ry="197" fill="#537886" stroke="#8fc4d2" strokeWidth="2" />
        <g clipPath="url(#hubOpening)">
            {holes.map(([cx, cy, rx, ry]) => <ellipse key={cx} cx={cx} cy={cy} rx={rx} ry={ry} fill="#fff" />)}
        </g>
        <g filter="url(#soft)">
            <path d="M715 628C735 615 760 610 778 608" stroke="#a9dce8" strokeWidth="6" fill="none" />
            <path d="M895 640C915 655 930 670 945 690" stroke="#8fc4d2" strokeWidth="6" fill="none" />
        </g>
        <ellipse cx="793" cy="793" rx="122" ry="125" fill="url(#discShade)" />
        <path d="M700 712C730 680 760 670 793 668C825 669 860 685 885 712" stroke="#a9dce8" strokeWidth="3" fill="none" />
        <ellipse cx="791" cy="794" rx="37" ry="38" fill="#fff" />
    </RotorFrame>
);

const tabs = [
    { title: "Documents - OneDrive", pl: 0 },
    { title: "Documents - OneDrive", pl: 0 },
    { title: "JSE_CV_CDT.docx", pl: 0 },
    { title: "Project Report - Online LaTeX E...", pl: 16 },
    { title: "Rotor FEA | SimScale Workbench", pl: 16, active: true },
    { title: "University of Cambridge: Applic...", pl: 16 },
];

const partRows = [
    { label: "Cutting Planes", add: true },
    { label: "Isosurfaces", add: true },
    { label: "Isovolumes", add: true },
    { label: "Animations", add: true },
    { label: "Particle Traces", add: true },
    { label: "Screenshots", add: true },
    { label: "Result Statistics", end: true },
];

export default function App() {
    return (
        <Page>
            <GlobalStyle />
            <CubeGradients />
            <MenuBar>
                <FaApple size={30} />
                <MenuItem $ml={37} $bold>Safari</MenuItem>
                <MenuItem $ml={37}>File</MenuItem>
                <MenuItem $ml={37}>Edit</MenuItem>
                <MenuItem $ml={37}>View</MenuItem>
                <MenuItem $ml={38}>History</MenuItem>
                <MenuItem $ml={37}>Bookmarks</MenuItem>
                <MenuItem $ml={36}>Window</MenuItem>
                <MenuItem $ml={36}>Help</MenuItem>
                <StatusArea>
                    <StatusText $size={23}>63°C 1453rpm</StatusText>
                    <StatusIcon $ml={31}><Bluetooth size={30} /></StatusIcon>
                    <StatusIcon $ml={29}><BatteryBar /></StatusIcon>
                    <InputBadge $ml={26}>A</InputBadge>
                    <StatusIcon $ml={30}><Wifi size={40} /></StatusIcon>
                    <StatusIcon $ml={16}><Volume1 size={34} fill="#fff" /></StatusIcon>
                    <StatusText $ml={33} $size={24}>41%</StatusText>
                    <StatusIcon $ml={8}><BatteryCharge /></StatusIcon>
                    <StatusText $ml={31}>Thu 16 Apr</StatusText>
                    <StatusText $ml={20} $track={1.5}>11:06:52</StatusText>
                    <StatusText $ml={25} $size={27.5} $weight={500}>Jordan Eriksen</StatusText>
                    <StatusIcon $ml={30}><Search size={30} /></StatusIcon>
                    <StatusIcon $ml={35}><SiriMark /></StatusIcon>
                    <StatusIcon $ml={24}><MenuExtras /></StatusIcon>
                    <StatusIcon $ml={46} />
                </StatusArea>
            </MenuBar>

            <Window>
                <Toolbar>
                    <Light $color="#ee6a5f" />
                    <Light $color="#e2bd4a" />
                    <Light $color="#67bc45" />
                    <ToolButton $ml={10}><NavChevron back /></ToolButton>
                    <ToolButton $ml={2} $dim><NavChevron dim /></ToolButton>
                    <ToolButton $ml={20} $w={74}><SidebarGlyph /></ToolButton>
                    <ToolButton $ml={415} $w={74}><HistoryGlyph>ℏ</HistoryGlyph></ToolButton>
                    <UrlBar>
                        <Lock size={20} fill="#f4f4f4" />
                        <span>simscale.com</span>
                        <Reload><RotateCw size={26} strokeWidth={1.5} /></Reload>
                    </UrlBar>
                    <ToolButton $ml={587} $w={73}><DownloadGlyph /></ToolButton>
                    <ToolButton $ml={17} $w={73}><ShareGlyph /></ToolButton>
                    <ToolButton $ml={17} $w={73}><TabsGlyph /></ToolButton>
                </Toolbar>
                <TabBar>
                    <PinnedTab><PinnedLogo /></PinnedTab>
                    <PinnedTab><PinnedLogo /></PinnedTab>
                    <PinnedTab><FaviconB>B</FaviconB></PinnedTab>
                    <PinnedTab><OverleafMark /></PinnedTab>
                    <PinnedTab><OfficeMark /></PinnedTab>
                    {tabs.map((tab, i) => <Tab key={i} $active={tab.active} $pl={tab.pl}>{tab.title}</Tab>)}
                    <NewTab>+</NewTab>
                </TabBar>
                <AppHeader>
                    <LogoMark />
                    <ProjectName>Rotor FEA</ProjectName>
                    <PrivateBadge><Lock size={20} fill="#fff" />PRIVATE</PrivateBadge>
                    <HeaderActions>
                        <Share2 size={24} strokeWidth={1.4} />
                        <Copy size={24} strokeWidth={1.4} />
                        <Pencil size={24} strokeWidth={1.4} />
                    </HeaderActions>
                    <Nav>
                        <NavLink>Dashboard</NavLink>
                        <NavLink $ml={41}>Public Projects</NavLink>
                        <NavLink $ml={40}>Forum</NavLink>
                        <NavLink $ml={40}>Help <ChevronDown size={18} strokeWidth={3} /></NavLink>
                        <NavLink $ml={24}>jeriksen</NavLink>
                        <Avatar>J</Avatar>
                        <ChevronDown size={18} strokeWidth={3} />
                    </Nav>
                </AppHeader>

                <Workspace>
                    <LeftColumn>
                        <TreePanel>
                            <TreeList>
                                {tree.map(item => <TreeNode key={item.label} item={item} />)}
                            </TreeList>
                            <ScrollTrack><ScrollThumb /></ScrollTrack>
                        </TreePanel>
                        <SplitH><SplitHandle /></SplitH>
                        <JobPanel>
                            <JobTitle>Job status</JobTitle>
                            {jobs.map((job, i) => (
                                <JobRow key={job.name} $last={i === jobs.length - 1}>
                                    <JobRing><CheckBadge size={26} /></JobRing>
                                    <JobText>
                                        <JobName>{job.name}</JobName>
                                        <JobKind>{job.kind}</JobKind>
                                    </JobText>
                                </JobRow>
                            ))}
                        </JobPanel>
                    </LeftColumn>
                    <GutterV $w={16} $top={742} />
                    <MiddleColumn>
                        <PartsPanel>
                            <LockMark><Lock size={26} strokeWidth={1.8} /></LockMark>
                            <PartsRow $h={40}>
                                <FoldMark><ChevronDown size={24} strokeWidth={3} color="#111" /></FoldMark>
                                Parts
                            </PartsRow>
                            <PartsRow $h={40} $child $pl={80}>
                                <FaEye size={28} color="#808080" />
                                Part 1
                            </PartsRow>
                            <PartsRow $h={40}>
                                <FoldMark><ChevronDown size={24} strokeWidth={3} color="#111" /></FoldMark>
                                Results
                            </PartsRow>
                            <PartsRow $h={35} $pt={5} $child $pl={85}><ResultLink>DIS: displacement</ResultLink></PartsRow>
                            {partRows.map(row => (
                                <PartsRow key={row.label} $end={row.end}>
                                    {row.label}
                                    {row.add && <CirclePlus />}
                                </PartsRow>
                            ))}
                            <SearchRow>
                                <span>search...</span>
                                <X size={22} strokeWidth={1.4} color="#888" />
                            </SearchRow>
                        </PartsPanel>
                        <PropsPanel>
                            <PropsTitle>displacement</PropsTitle>
                            <FieldRow>
                                <FieldLabel>Scale factor (can be set past slider max)</FieldLabel>
                                <SliderWrap>
                                    <SliderThumb />
                                    <SliderTrack />
                                </SliderWrap>
                                <ValueBox>0.100000</ValueBox>
                            </FieldRow>
                        </PropsPanel>
                    </MiddleColumn>
                    <GutterV $w={10} />
                    <Viewer>
                        <Rotor />
                        <TriadFrame><AxisTriad /></TriadFrame>
                        <TimeLabel>Time = 0.000000</TimeLabel>
                        <ToolColumn>
                            <ToolGroup>
                                <ToolCell><Crosshair letter="P" /></ToolCell>
                                <ToolCell><Crosshair letter="E" /></ToolCell>
                                <ToolCell><RotateAxes /></ToolCell>
                                <ToolCell $active><TargetPick /></ToolCell>
                            </ToolGroup>
                            <ToolGroup $mt={9}>
                                {playback.map((d, i) => (
                                    <ToolCell key={d}><PlayShape d={d} fill={i === 2 ? "#000" : "#9a9a9a"} /></ToolCell>
                                ))}
                                <ToolCell><FaHiking size={44} /></ToolCell>
                                <ToolCell><RunnerIcon /></ToolCell>
                            </ToolGroup>
                            <ToolGroup $mt={135}>
                                {cubeVariants.map((v, i) => <ToolCell key={i}><Cube variant={v} /></ToolCell>)}
                            </ToolGroup>
                        </ToolColumn>
                        <ChatTab><FaComments size={30} /></ChatTab>
                    </Viewer>
                </Workspace>
            </Window>
        </Page>
    );
}
